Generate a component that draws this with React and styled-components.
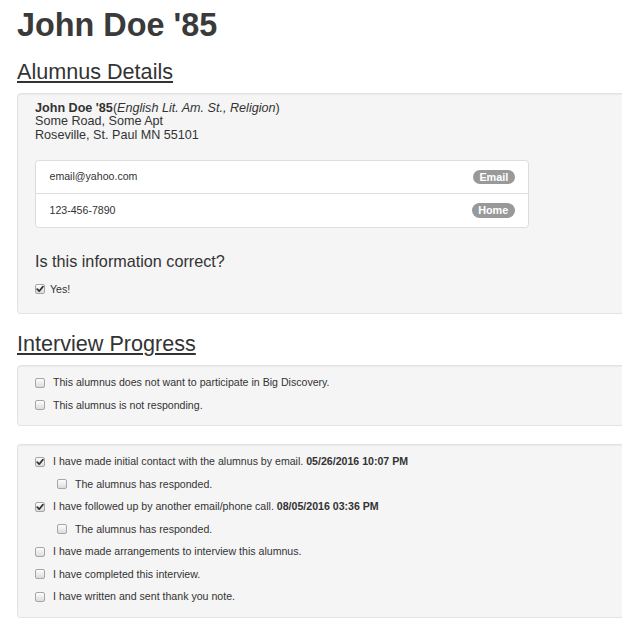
import React from 'react';
import styled, { createGlobalStyle } from 'styled-components';

const GlobalStyle = createGlobalStyle`
  body {
    margin: 0;
    background: #fff;
    color: #333;
    font-family: "Liberation Sans", Arial, sans-serif;
  }
`;

const CheckMark = () => (
  <svg width="8" height="8" viewBox="0 0 8 8">
    <path d="M1.2 4.2 L3.2 6.2 L6.9 1.6" fill="none" stroke="#333" strokeWidth="1.7" strokeLinecap="round" strokeLinejoin="round" />
  </svg>
);

const Check = ({ checked, gap = '8px', indent, children }) => (
  <CheckRow $indent={indent}>
    <Box $gap={gap}>{checked && <CheckMark />}</Box>
    <span>{children}</span>
  </CheckRow>
);

const App = () => {
  return (
    <Page>
      <GlobalStyle />
      <Title>John Doe '85</Title>

      <SectionTitle>Alumnus Details</SectionTitle>
      <Well $pad="8px 17px 13px">
        <Address>
          <strong>John Doe '85</strong>(<em>English Lit. Am. St., Religion</em>)<br />
          Some Road, Some Apt<br />
          Roseville, St. Paul MN 55101
        </Address>
        <ListGroup>
          <ListItem>
            email@yahoo.com
            <Badge>Email</Badge>
          </ListItem>
          <ListItem>
            123-456-7890
            <Badge>Home</Badge>
          </ListItem>
        </ListGroup>
        <Question>Is this information correct?</Question>
        <Check checked gap="5px">Yes!</Check>
      </Well>

      <SectionTitle>Interview Progress</SectionTitle>
      <Well $pad="5px 17px 9px">
        <Check>This alumnus does not want to participate in Big Discovery.</Check>
        <Check>This alumnus is not responding.</Check>
      </Well>

      <Well $pad="5px 17px 9px">
        <Check checked>
          I have made initial contact with the alumnus by email. <b>05/26/2016 10:07 PM</b>
        </Check>
        <Check indent>The alumnus has responded.</Check>
        <Check checked>
          I have followed up by another email/phone call. <b>08/05/2016 03:36 PM</b>
        </Check>
        <Check indent>The alumnus has responded.</Check>
        <Check>I have made arrangements to interview this alumnus.</Check>
        <Check>I have completed this interview.</Check>
        <Check>I have written and sent thank you note.</Check>
      </Well>
    </Page>
  );
};

const Page = styled.div`
  padding: 7px 0 0 17px;
  overflow: hidden;
`;

const Title = styled.h1`
  margin: 0;
  font-size: 32.4px;
  line-height: 36px;
  font-weight: 700;
  color: #3a3a3a;
`;

const SectionTitle = styled.h2`
  margin: 17px 0 9px;
  font-size: 21.6px;
  line-height: 24px;
  font-weight: 400;
  color: #333;
  text-decoration: underline;
  text-decoration-thickness: 2px;
  text-underline-offset: 2px;
`;

const Well = styled.div`
  margin: 0 -40px 18px 0;
  padding: ${p => p.$pad};
  background: #f5f5f5;
  border: 1px solid #e3e3e3;
  border-radius: 3.6px;
  box-shadow: inset 0 1px 1px rgba(0, 0, 0, 0.05);

  &:last-child {
    margin-bottom: 0;
  }
`;

const Address = styled.div`
  font-size: 12.6px;
  line-height: 13.3px;
  margin-bottom: 18px;
`;

const ListGroup = styled.ul`
  list-style: none;
  margin: 0;
  padding: 0;
  width: 494px;
`;

const ListItem = styled.li`
  display: flex;
  justify-content: space-between;
  align-items: center;
  padding: 8.5px 13.5px;
  font-size: 10.6px;
  line-height: 15.4px;
  background: #fff;
  border: 1px solid #ddd;
  margin-bottom: -1px;

  &:first-child {
    border-radius: 3.6px 3.6px 0 0;
  }

  &:last-child {
    margin-bottom: 0;
    border-radius: 0 0 3.6px 3.6px;
  }
`;

const Badge = styled.span`
  display: inline-block;
  padding: 2px 6.3px;
  font-size: 10.8px;
  font-weight: 700;
  line-height: 1;
  color: #fff;
  background: #999;
  border-radius: 9px;
`;

const Question = styled.h4`
  margin: 25px 0 7px;
  font-size: 16.2px;
  line-height: 17.8px;
  font-weight: 400;
  color: #333;
`;

const CheckRow = styled.label`
  display: flex;
  align-items: center;
  height: 22.5px;
  padding-left: ${p => (p.$indent ? '22px' : '0')};
  font-size: 10.6px;
  white-space: nowrap;
`;

const Box = styled.span`
  display: flex;
  align-items: center;
  justify-content: center;
  flex-shrink: 0;
  box-sizing: border-box;
  width: 10px;
  height: 10px;
  margin: 1px ${p => p.$gap} 0 0;
  border: 1px solid #a6a6a6;
  border-radius: 2px;
  background: linear-gradient(#fdfdfd, #dcdcdc);
`;

export default App;
